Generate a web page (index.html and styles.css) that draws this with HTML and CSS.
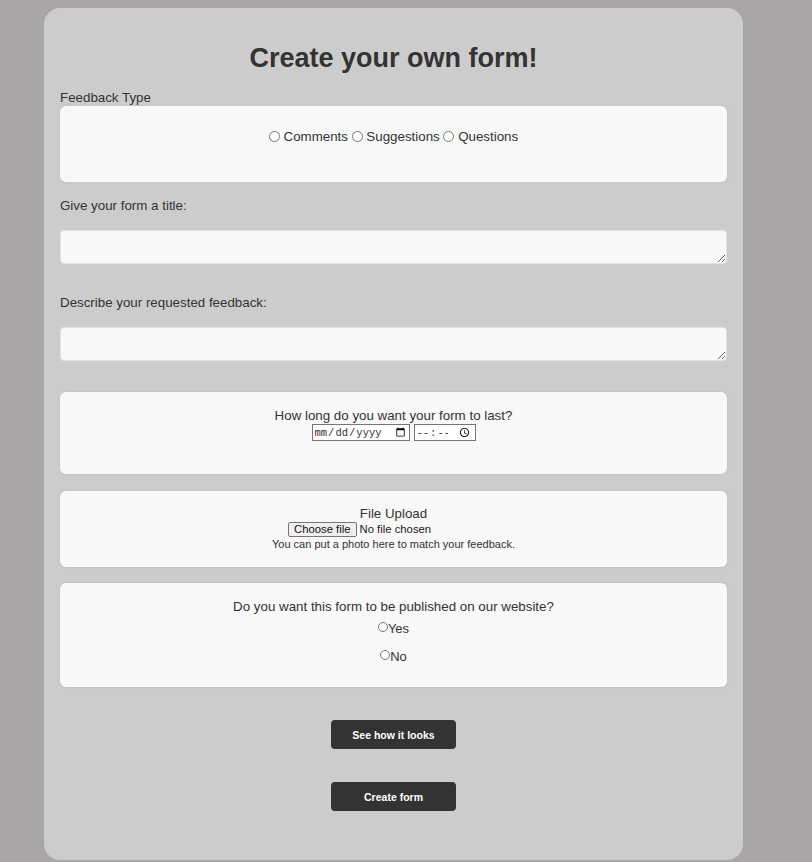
FILE: index.html
```html
<!DOCTYPE html>
<html lang="en">
<head>
<meta charset="utf-8">
<title>Create your own form!</title>
<link rel="stylesheet" href="styles.css">
</head>
<body>
<main class="card">
  <h1 class="title">Create your own form!</h1>
  <form class="form">
    <div class="label label-tight">Feedback Type</div>
    <div class="box box-type">
      <label class="opt"><input type="radio" name="type"> Comments</label>
      <label class="opt"><input type="radio" name="type"> Suggestions</label>
      <label class="opt"><input type="radio" name="type"> Questions</label>
    </div>

    <label class="label label-field" for="t">Give your form a title:</label>
    <textarea id="t" class="area"></textarea>

    <label class="label label-field label-desc" for="d">Describe your requested feedback:</label>
    <textarea id="d" class="area"></textarea>

    <div class="box box-date">
      <div class="q">How long do you want your form to last?</div>
      <div class="dt">
        <input type="date" class="date">
        <input type="time" class="time">
      </div>
    </div>

    <div class="box box-file">
      <div class="q">File Upload</div>
      <div class="file-row">
        <div class="file-input">
          <label class="file-btn">Choose file<input type="file" class="file-hidden"></label>
          <span class="file-name">No file chosen</span>
        </div>
      </div>
      <div class="hint">You can put a photo here to match your feedback.</div>
    </div>

    <div class="box box-pub">
      <div class="q">Do you want this form to be published on our website?</div>
      <label class="yn yes"><input type="radio" name="pub">Yes</label>
      <label class="yn no"><input type="radio" name="pub">No</label>
    </div>

    <div class="actions">
      <button type="button" class="btn">See how it looks</button>
      <button type="submit" class="btn">Create form</button>
    </div>
  </form>
</main>
</body>
</html>
```
FILE: styles.css
```css
html, body {
  margin: 0;
  padding: 0;
}
body {
  background: #a8a6a6;
  font-family: "Liberation Sans", Arial, sans-serif;
  color: #333333;
  padding-top: 8px;
  height: 862px;
  overflow: hidden;
}
.card {
  margin-left: 44px;
  width: 699px;
  box-sizing: border-box;
  background: #cccccc;
  border-radius: 16px;
  padding: 28px 16px 48px;
  min-height: 852px;
}
.title {
  margin: 0;
  text-align: center;
  font-size: 27px;
  line-height: 44px;
  font-weight: bold;
  color: #333333;
}
.form {
  display: flex;
  flex-direction: column;
}
.label {
  font-size: 13.33px;
  line-height: 16px;
  color: #333333;
}
.label-tight {
  margin-top: 10px;
}
.box {
  background: #f8f8f8;
  border-radius: 6px;
  box-shadow: 0 0 3px rgba(0,0,0,0.08);
  text-align: center;
  font-size: 13.33px;
}
.box-type {
  height: 76px;
  box-sizing: border-box;
  padding-top: 23px;
  line-height: 16px;
}
.opt input {
  margin: 0;
  width: 11px;
  height: 11px;
  vertical-align: -1px;
}
.label-field {
  margin-top: 16px;
  margin-bottom: 16px;
}
.label-desc {
  margin-top: 31px;
  margin-bottom: 16px;
}
.area {
  display: block;
  height: 34px;
  box-sizing: border-box;
  background: #f8f8f8;
  border: 1px solid #e2e2e2;
  border-radius: 4px;
  resize: vertical;
  font: inherit;
}
.box-date {
  margin-top: 31px;
  height: 82px;
  box-sizing: border-box;
  padding-top: 16px;
}
.q {
  font-size: 13.33px;
  line-height: 16px;
}
.dt {
  display: flex;
  justify-content: center;
  gap: 4px;
}
.date, .time {
  font-family: "Liberation Mono", monospace;
  font-size: 10.5px;
  height: 17px;
  box-sizing: border-box;
  border: 1px solid #767676;
  border-radius: 0;
  padding: 0 1px;
  background: #ffffff;
  color: #333;
}
.date { width: 98px; }
.time { width: 62px; }
.box-file {
  margin-top: 17px;
  height: 76px;
  box-sizing: border-box;
  padding-top: 15px;
}
.file-row {
  display: flex;
  justify-content: center;
  height: 15px;
}
.file-input {
  width: 211px;
  display: flex;
  align-items: center;
  gap: 3px;
  font-size: 11.3px;
  line-height: 13px;
}
.file-btn {
  display: inline-flex;
  align-items: center;
  height: 15px;
  box-sizing: border-box;
  padding: 0 5px;
  border: 1px solid #767676;
  border-radius: 2px;
  background: #efefef;
  color: #111;
  font-size: 11.3px;
  cursor: pointer;
}
.file-hidden {
  display: none;
}
.file-name {
  color: #222;
}
.hint {
  font-size: 11px;
  line-height: 14px;
}
.box-pub {
  margin-top: 16px;
  height: 104px;
  box-sizing: border-box;
  padding-top: 16px;
  display: flex;
  flex-direction: column;
  align-items: center;
}
.yn {
  display: block;
  font-size: 13px;
  line-height: 16px;
}
.yn input {
  margin: 0;
  width: 10px;
  height: 10px;
  vertical-align: 1px;
}
.yes { margin-top: 6px; }
.no { margin-top: 12px; }
.actions {
  display: flex;
  flex-direction: column;
  align-items: center;
  gap: 33px;
  margin-top: 33px;
}
.btn {
  width: 125px;
  height: 29px;
  background: #333333;
  color: #ffffff;
  border: none;
  border-radius: 4px;
  font-family: "Liberation Sans", Arial, sans-serif;
  font-size: 10.5px;
  font-weight: bold;
  cursor: pointer;
}
```
